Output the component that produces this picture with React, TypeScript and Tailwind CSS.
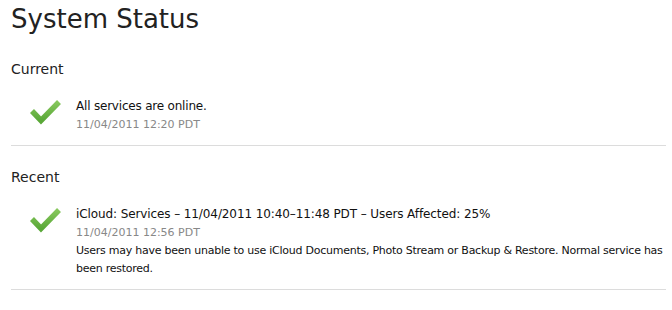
import React from "react";

function Check() {
  return (
    <svg width="32" height="26" viewBox="0 0 32 26" className="block">
      <defs>
        <linearGradient id="g" x1="0" y1="0" x2="0" y2="1">
          <stop offset="0" stopColor="#86c75c" />
          <stop offset="1" stopColor="#5aa838" />
        </linearGradient>
      </defs>
      <polyline points="2,12 11,21.5 29,3" fill="none" stroke="url(#g)" strokeWidth="5.5" strokeLinejoin="miter" />
    </svg>
  );
}

export default function App() {
  return (
    <div className="w-[672px] h-[310px] bg-white text-[#222] pl-[11px] pr-[6px]" style={{ fontFamily: '"DejaVu Sans", sans-serif' }}>
      <h1 className="text-[26px] leading-[34px] pt-[2px] text-[#222]">System Status</h1>
      <h2 className="text-[14px] leading-[18px] mt-[24px] text-[#222]">Current</h2>
      <div className="flex border-b border-[#dcdcdc] pt-[18px] pb-[11px]">
        <div className="w-[65px] pl-[19px] pt-[3px] shrink-0"><Check /></div>
        <div className="flex flex-col">
          <div className="text-[12px] leading-[20px] tracking-[-0.2px] text-[#111]">All services are online.</div>
          <div className="text-[11px] leading-[18px] text-[#888]">11/04/2011 12:20 PDT</div>
        </div>
      </div>
      <h2 className="text-[14px] leading-[18px] mt-[22px] text-[#222]">Recent</h2>
      <div className="flex border-b border-[#dcdcdc] pt-[18px] pb-[11px]">
        <div className="w-[65px] pl-[19px] pt-[3px] shrink-0"><Check /></div>
        <div className="flex flex-col">
          <div className="text-[12px] leading-[20px] tracking-[-0.1px] text-[#111]">iCloud: Services – 11/04/2011 10:40–11:48 PDT – Users Affected: 25%</div>
          <div className="text-[11px] leading-[18px] text-[#888]">11/04/2011 12:56 PDT</div>
          <div className="text-[11px] leading-[18px] tracking-[-0.25px] text-[#111]">Users may have been unable to use iCloud Documents, Photo Stream or Backup &amp; Restore. Normal service has been restored.</div>
        </div>
      </div>
    </div>
  );
}
